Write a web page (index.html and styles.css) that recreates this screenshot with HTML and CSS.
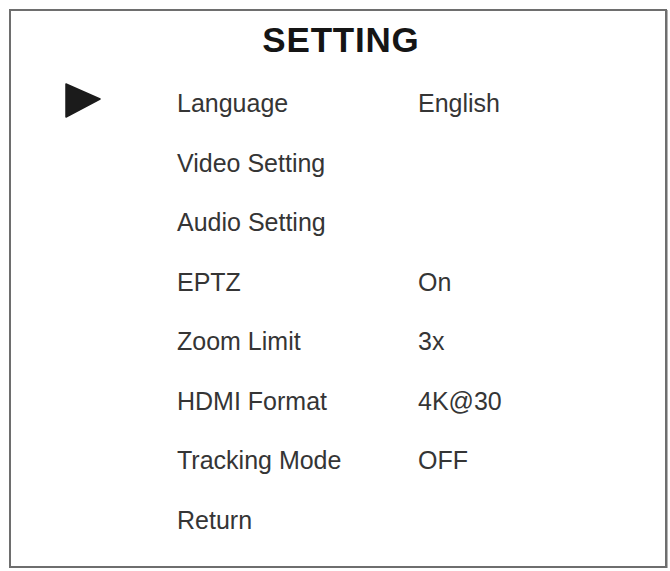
FILE: index.html
```html
<!DOCTYPE html>
<html>
<head>
<meta charset="utf-8">
<link rel="stylesheet" href="styles.css">
</head>
<body>
<div class="panel">
  <h1 class="title">SETTING</h1>
  <div class="menu">
    <div class="cursor"><svg width="36" height="35" viewBox="0 0 36 35"><polygon points="1,1 35,16 1,34" fill="#1b1b1b" stroke="#1b1b1b" stroke-width="1.5" stroke-linejoin="round"/></svg></div>
    <div class="label">Language</div><div class="value">English</div>
    <div class="cursor"></div><div class="label">Video Setting</div><div class="value"></div>
    <div class="cursor"></div><div class="label">Audio Setting</div><div class="value"></div>
    <div class="cursor"></div><div class="label">EPTZ</div><div class="value">On</div>
    <div class="cursor"></div><div class="label">Zoom Limit</div><div class="value">3x</div>
    <div class="cursor"></div><div class="label">HDMI Format</div><div class="value">4K@30</div>
    <div class="cursor"></div><div class="label">Tracking Mode</div><div class="value">OFF</div>
    <div class="cursor"></div><div class="label">Return</div><div class="value"></div>
  </div>
</div>
</body>
</html>
```
FILE: styles.css
```css
html, body {
  margin: 0;
  padding: 0;
  background: #ffffff;
}
body {
  font-family: "Liberation Sans", Arial, sans-serif;
  padding: 9px 0 0 9px;
}
.panel {
  box-sizing: border-box;
  width: 658px;
  height: 559px;
  border: 2px solid #6e6e6e;
  box-shadow: 1px 1px 0 #b5b5b5;
  padding-top: 9px;
  background: #fff;
}
.title {
  margin: 0;
  text-align: center;
  font-size: 35px;
  line-height: 40px;
  font-weight: bold;
  color: #151515;
  letter-spacing: 0.8px;
  padding-left: 6px;
}
.menu {
  margin-top: 14px;
  display: grid;
  grid-template-columns: 166px 241px 1fr;
  grid-auto-rows: 59.5px;
  align-items: center;
}
.cursor {
  padding-left: 54px;
  display: flex;
  align-items: center;
  height: 100%;
}
.cursor svg {
  display: block;
  margin-top: -6px;
}
.label, .value {
  font-size: 25px;
  line-height: 59.5px;
  color: #353535;
  white-space: nowrap;
}
```
